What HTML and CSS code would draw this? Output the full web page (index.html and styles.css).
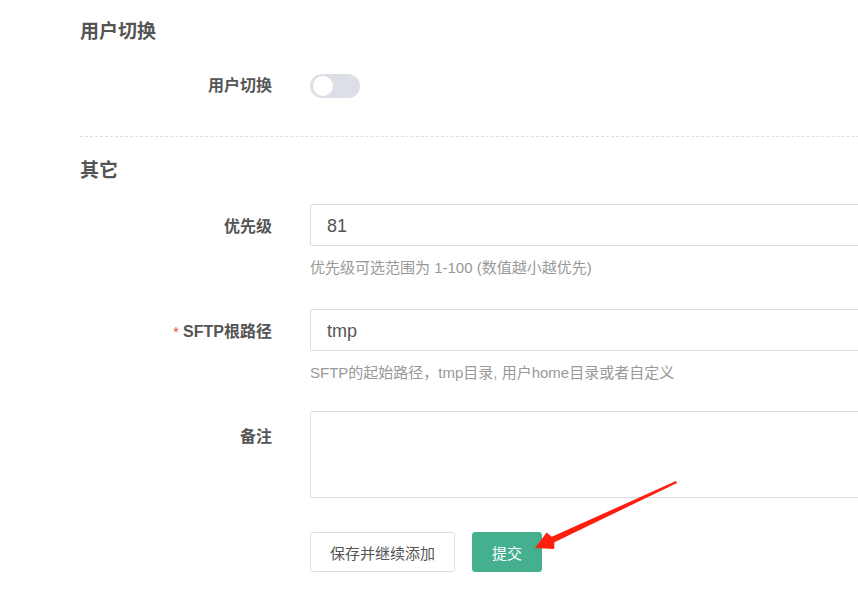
FILE: index.html
```html
<!DOCTYPE html>
<html lang="zh-CN">

<head>
  <meta charset="UTF-8" />
  <meta name="viewport" content="width=device-width, initial-scale=1.0" />
  <title>主机设置</title>
  <link rel="stylesheet" href="styles.css">
</head>

<body>
  <div class="page">

    <div class="section-title">用户切换</div>
    <div class="form-row switch-row">
      <label class="form-label">用户切换</label>
      <div class="form-field">
        <span class="switch"><span class="switch-knob"></span></span>
      </div>
    </div>

    <div class="divider"></div>

    <div class="section-title">其它</div>
    <div class="form-row row-first">
      <label class="form-label">优先级</label>
      <div class="form-field">
        <input class="form-input" type="text" value="81" />
        <div class="help">优先级可选范围为 1-100 (数值越小越优先)</div>
      </div>
    </div>

    <div class="form-row row-sftp">
      <label class="form-label"><span class="required">*</span> SFTP根路径</label>
      <div class="form-field">
        <input class="form-input" type="text" value="tmp" />
        <div class="help">SFTP的起始路径，tmp目录, 用户home目录或者自定义</div>
      </div>
    </div>

    <div class="form-row row-note">
      <label class="form-label">备注</label>
      <div class="form-field">
        <textarea class="form-textarea"></textarea>
      </div>
    </div>

    <div class="form-row row-actions">
      <div class="form-label"></div>
      <div class="form-field actions">
        <button class="btn btn-default">保存并继续添加</button>
        <button class="btn btn-primary">提交</button>
      </div>
    </div>

  </div>

  <!-- annotation arrow -->
  <svg class="arrow" width="858" height="592" viewBox="0 0 858 592">
    <polygon fill="#ff1f0f"
      points="676,481 677,483 554.4,542.2 554.2,548.9 535,548 546.6,532.6 551.8,536.8" />
  </svg>
</body>

</html>
```

FILE: styles.css
```css
body {
  margin: 0;
  background-color: #fff;
  font-family: 'Liberation Sans', 'Noto Sans CJK SC', sans-serif;
  color: #555;
  overflow: hidden;
  position: relative;
  width: 858px;
  height: 592px;
}

.page {
  padding: 20px 0 0 80px;
  width: 1000px;
}

.section-title {
  font-size: 19px;
  font-weight: bold;
  line-height: 24px;
  color: #555;
}

.form-row {
  display: flex;
}

.form-label {
  width: 192px;
  flex: 0 0 192px;
  box-sizing: border-box;
  text-align: right;
  font-size: 16px;
  font-weight: bold;
  line-height: 42px;
  padding-top: 2px;
  color: #555;
  margin-right: 38px;
}

.form-field {
  flex: 1;
}

.switch-row {
  margin-top: 30px;
}

.switch-row .form-label {
  line-height: 24px;
  padding-top: 0;
}

.switch {
  display: block;
  width: 50px;
  height: 24px;
  border-radius: 12px;
  background-color: #dcdfe6;
  position: relative;
}

.switch-knob {
  position: absolute;
  left: 3px;
  top: 2px;
  width: 20px;
  height: 20px;
  border-radius: 50%;
  background-color: #fff;
}

.divider {
  border-top: 1px dashed #e0e0e0;
  margin: 38px 0 22px;
}

.row-first {
  margin-top: 21px;
}

.row-sftp {
  margin-top: 31px;
}

.row-note {
  margin-top: 28px;
}

.row-note .form-label {
  padding-top: 5px;
}

.row-actions {
  margin-top: 34px;
}

.form-input {
  display: block;
  box-sizing: border-box;
  width: 100%;
  height: 42px;
  border: 1px solid #dcdcdc;
  border-radius: 2px;
  padding: 2px 16px 0;
  font-family: inherit;
  font-size: 18px;
  color: #555;
  outline: none;
}

.form-textarea {
  display: block;
  box-sizing: border-box;
  width: 100%;
  height: 87px;
  border: 1px solid #dcdfe6;
  border-radius: 2px;
  resize: none;
  outline: none;
}

.help {
  margin-top: 12px;
  font-size: 15px;
  line-height: 20px;
  color: #999;
}

.required {
  color: #e8434a;
  font-weight: normal;
  font-size: 14px;
}

.actions {
  display: flex;
  gap: 17px;
}

.btn {
  height: 40px;
  padding: 0 19px;
  font-family: inherit;
  font-size: 15px;
  border-radius: 3px;
  cursor: pointer;
}

.btn-default {
  background-color: #fff;
  border: 1px solid #dcdfe6;
  color: #555;
}

.btn-primary {
  background-color: #45b08f;
  border: 1px solid #45b08f;
  color: #fff;
}

.arrow {
  position: absolute;
  left: 0;
  top: 0;
  pointer-events: none;
}
```
